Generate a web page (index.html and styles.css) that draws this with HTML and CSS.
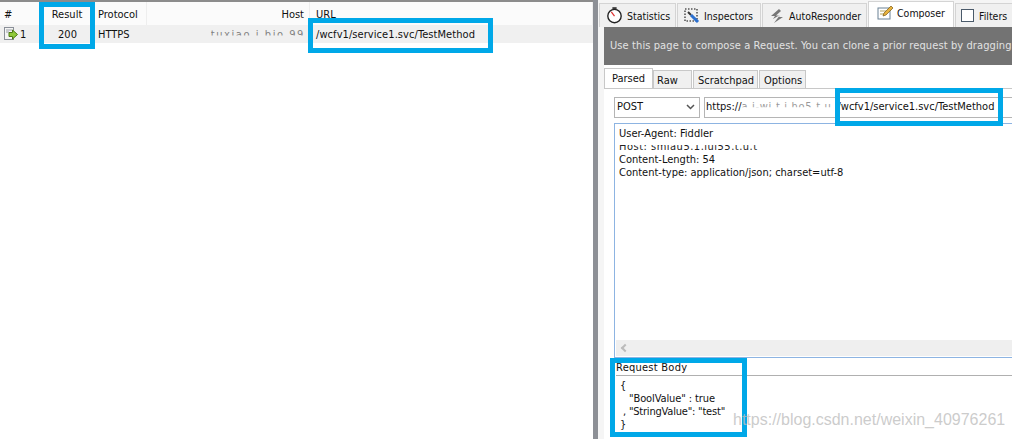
FILE: index.html
```html
<!DOCTYPE html>
<html lang="en">
<head>
<meta charset="utf-8">
<title>Fiddler Composer</title>
<link rel="stylesheet" href="styles.css">
</head>
<body>
<div class="app">
  <section class="sessions">
    <div class="cols head">
      <div class="c first">#</div>
      <div class="c center">Result</div>
      <div class="c">Protocol</div>
      <div class="c right">Host</div>
      <div class="c last">URL</div>
    </div>
    <div class="cols row">
      <div class="c first id">
        <svg class="rowicon" width="14" height="14" viewBox="0 0 14 14">
          <rect x="0.5" y="0.5" width="9" height="12" fill="#f4f4f4" stroke="#8a8f98"/>
          <path d="M2 3h6M2 5h3" stroke="#9aa0a8"/>
          <path d="M5 5.500h3.500V3l5 4.500-5 4.500V9.500H5z" fill="#8fc93a" stroke="#4d7a12"/>
        </svg>1
      </div>
      <div class="c center">200</div>
      <div class="c">HTTPS</div>
      <div class="c right host"><span class="smudge">tuxiao.i.bio.99</span></div>
      <div class="c last">/wcfv1/service1.svc/TestMethod</div>
    </div>
  </section>
  <div class="splitter"></div>
  <section class="detail">
    <nav class="tabs">
      <div class="tab t-stat">
        <svg width="17" height="17" viewBox="0 0 16 16"><circle cx="8" cy="8.500" r="6.300" fill="#fff" stroke="#222" stroke-width="1.300"/><path d="M8 8.500L5 4.500" stroke="#d33" stroke-width="1.200"/><path d="M6 1h4" stroke="#222" stroke-width="1.500"/></svg>
        Statistics</div>
      <div class="tab t-insp">
        <svg width="16" height="16" viewBox="0 0 16 16"><rect x="1" y="1" width="12" height="12" fill="none" stroke="#555" stroke-width="1.600" stroke-dasharray="1.500 1.500"/><path d="M4 4l3 3" stroke="#333" stroke-width="2"/><path d="M7 7l7 7" stroke="#2a6fd0" stroke-width="3"/></svg>
        Inspectors</div>
      <div class="tab t-auto">
        <svg width="16" height="16" viewBox="0 0 16 16"><path d="M10 1L2 8h4l-2 3 6-3.500H7l5-4.500zM11 7l-6 8 9-6h-4z" fill="#777"/></svg>
        AutoResponder</div>
      <div class="tab active">
        <svg width="17" height="16" viewBox="0 0 17 16"><rect x="1" y="3" width="12" height="11" fill="#fff" stroke="#6b8296"/><path d="M3 6h6M3 9h5" stroke="#b5a25a"/><path d="M6 11l1-3 7-7 2 2-7 7z" fill="#e8b23c" stroke="#7a5a14" stroke-width=".7"/></svg>
        Composer</div>
      <div class="tab t-filt">
        <span class="check"></span>
        Filters</div>
    </nav>
    <div class="panel">
      <div class="banner">Use this page to compose a Request. You can clone a prior request by dragging</div>
      <div class="subtabs">
        <div class="subtab active">Parsed</div>
        <div class="subtab raw">Raw</div>
        <div class="subtab scratch">Scratchpad</div>
        <div class="subtab opts">Options</div>
      </div>
      <div class="urlbar">
        <div class="method">POST
          <svg width="9" height="6" viewBox="0 0 9 6"><path d="M1 1l3.500 3.500L8 1" fill="none" stroke="#555" stroke-width="1.500"/></svg>
        </div>
        <div class="url">https://<span class="smudge wide">a.i-wi.t.i.ho5.t.u</span>/wcfv1/service1.svc/TestMethod</div>
      </div>
      <div class="headers">
        <div class="lines">
          <div>User-Agent: Fiddler</div>
          <div class="clip">Host: smiau5.1.iui55.t.u.t</div>
          <div>Content-Length: 54</div>
          <div>Content-type: application/json; charset=utf-8</div>
        </div>
        <div class="scroll"><span class="arrow"></span></div>
      </div>
      <div class="bodytitle">Request Body</div>
      <div class="body">
        <div>{</div>
        <div class="ind">"BoolValue" : true</div>
        <div class="ind2">, "StringValue": "test"</div>
        <div>}</div>
      </div>
    </div>
  </section>
  <div class="mark m-result"></div>
  <div class="mark m-url"></div>
  <div class="mark m-comp"></div>
  <div class="mark m-body"></div>
  <div class="watermark">https://blog.csdn.net/weixin_40976261</div>
</div>
</body>
</html>
```
FILE: styles.css
```css
* { box-sizing: border-box; }
html, body { margin: 0; height: 100%; overflow: hidden; background: #fff; }
body { font: 11px/14px "DejaVu Sans Condensed", "DejaVu Sans", sans-serif; font-stretch: condensed; color: #111; }
.app { position: relative; display: flex; width: 1012px; height: 439px; overflow: hidden; }

.sessions { width: 593px; flex: none; border-top: 2px solid #8c8c8c; }
.cols { display: grid; grid-template-columns: 42px 51px 54px 163px 1fr; }
.head { height: 23px; background: #fbfbfb; align-items: center; }
.head .c { border-right: 1px solid #eeeeee; height: 23px; line-height: 26px; }
.row { height: 18px; background: #f0f0f0; line-height: 19px; }
.c { padding: 0 5px; white-space: nowrap; overflow: hidden; }
.first { padding-left: 4px; }
.last { padding-left: 6px; letter-spacing: .07px; }
.center { text-align: center; }
.right { text-align: right; }
.id { display: flex; align-items: center; gap: 2px; }
.rowicon { flex: none; }
.smudge { display: inline-block; color: #333; letter-spacing: 1.600px; opacity: .6; clip-path: inset(20% 0 45% 0); }

.splitter { width: 5px; flex: none; background: #8d9096; }
.detail { flex: 1; min-width: 0; background: #f5f5f5; overflow: hidden; }
.tabs { display: flex; height: 27px; padding: 1px 0 0 1px; }
.tab { display: flex; flex: none; align-items: center; gap: 4px; height: 24px; margin-top: 2px; padding: 0 0 0 6px; background: #f0f0f0; border: 1px solid #d4d4d4; border-bottom: 0; white-space: nowrap; margin-right: 1px; font-size: 10.500px; }
.t-stat { width: 77px; }
.t-insp { width: 84px; }
.t-auto { width: 105px; }
.tab.active { width: 86px; height: 26px; margin-top: 0; padding: 0 0 3px 8px; gap: 3px; background: #fff; }
.t-filt { width: 70px; gap: 5px; padding-left: 5px; }
.check { flex: none; width: 13px; height: 13px; background: #fff; border: 1px solid #4a5a6a; }

.panel { margin-left: 6px; background: #fff; height: 412px; }
.banner { height: 38px; background: #737373; color: #e2e2e2; line-height: 38px; padding-left: 6px; white-space: nowrap; overflow: hidden; letter-spacing: .1px; }
.subtabs { display: flex; align-items: flex-end; height: 23px; }
.subtab { height: 18px; line-height: 19px; padding: 0 4px; background: #f0f0f0; border: 1px solid #c8c8c8; border-bottom: 0; margin-right: 1px; }
.subtab.active { width: 49px; height: 20px; background: #fff; padding: 0 0 0 7px; margin-right: 0; }
.subtab.raw { width: 39px; padding-left: 3px; }
.subtab.scratch { width: 65px; }
.subtab.opts { width: 47px; }
.urlbar { display: flex; gap: 4px; height: 35px; padding: 8px 0 0 10px; border-top: 1px solid #c8c8c8; }
.method { display: flex; justify-content: space-between; align-items: center; flex: none; width: 86px; height: 21px; border: 1px solid #b5b5b5; padding: 0 4px 2px 2px; }
.url { flex: 1; min-width: 0; height: 21px; border: 1px solid #b5b5b5; border-right: 0; line-height: 17px; padding-left: 1px; white-space: nowrap; overflow: hidden; }
.wide { width: 96px; vertical-align: top; letter-spacing: .7px; overflow: hidden; opacity: .5; }
.headers { position: relative; height: 235px; margin-left: 10px; border: 1px solid #8db4e2; border-right: 0; padding: 3px 0 0 4px; }
.lines { line-height: 13px; }
.clip { height: 13px; overflow: hidden; color: #222; letter-spacing: .5px; clip-path: inset(38% 40% 0 0); }
.scroll { position: absolute; left: 1px; right: 0; bottom: 1px; height: 16px; background: #efefef; }
.arrow { position: absolute; left: 6px; top: 5px; width: 6px; height: 6px; border-left: 2px solid #bbb; border-bottom: 2px solid #bbb; transform: rotate(45deg); }
.bodytitle { height: 18px; margin-left: 12px; padding-top: 3px; line-height: 14px; letter-spacing: .25px; border-bottom: 1px solid #b0b0b0; }
.body { padding: 3px 0 0 16px; line-height: 13px; }
.ind { padding-left: 9px; letter-spacing: -.1px; }
.ind2 { padding-left: 3px; letter-spacing: -.2px; }

.mark { position: absolute; border: 5px solid #00a8e8; }
.m-result { left: 39px; top: 2px; width: 56px; height: 47px; }
.m-url { left: 308px; top: 18px; width: 185px; height: 35px; }
.m-comp { left: 835px; top: 88px; width: 168px; height: 38px; }
.m-body { left: 610px; top: 358px; width: 137px; height: 79px; }
.watermark { position: absolute; left: 733px; top: 411px; color: rgba(190,190,190,.8); font: 16px/18px "Liberation Sans", sans-serif; white-space: nowrap; }
```
